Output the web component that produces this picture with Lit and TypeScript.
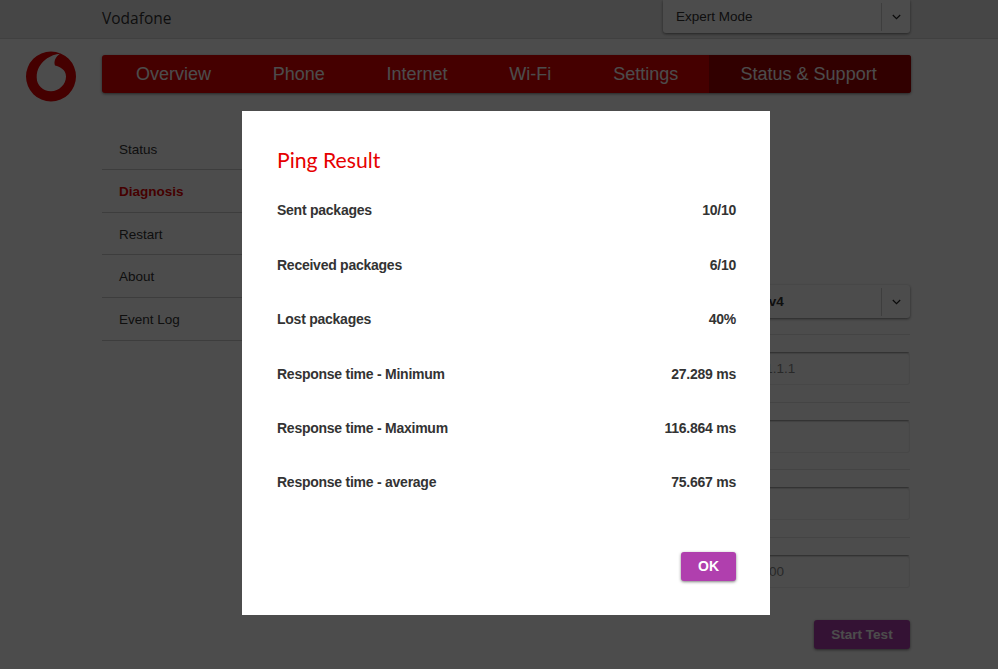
import { LitElement, html, css } from 'lit';
import { customElement } from 'lit/decorators.js';

const NAV = ['Overview', 'Phone', 'Internet', 'Wi-Fi', 'Settings'];
const SIDE = ['Status', 'Diagnosis', 'Restart', 'About', 'Event Log'];
const RESULTS = [
  ['Sent packages', '10/10'],
  ['Received packages', '6/10'],
  ['Lost packages', '40%'],
  ['Response time - Minimum', '27.289 ms'],
  ['Response time - Maximum', '116.864 ms'],
  ['Response time - average', '75.667 ms'],
];

const chevron = html`<svg width="9" height="6" viewBox="0 0 9 6"><path d="M.8 1l3.7 3.7L8.2 1" fill="none" stroke="currentColor" stroke-width="1.2"/></svg>`;

@customElement('app-root')
export class AppRoot extends LitElement {
  static styles = css`
    :host {
      display: block;
      height: 669px;
      overflow: hidden;
      background: #fff;
      color: #333;
      font-family: "Liberation Sans", Arial, sans-serif;
      font-size: 13.5px;
    }

    .topbar {
      height: 39px;
      box-sizing: border-box;
      padding-left: 102px;
      padding-right: 88px;
      display: flex;
      justify-content: space-between;
      background: #ececec;
      border-bottom: 1px solid #d8d8d8;
    }

    .brand {
      font-family: "Open Sans", sans-serif;
      font-size: 15.5px;
      line-height: 37px;
      color: #333;
    }

    .select {
      display: flex;
      align-items: center;
      height: 33px;
      box-sizing: border-box;
      background: #fff;
      border-radius: 0 0 3px 3px;
      box-shadow: 0 1px 3px rgba(0, 0, 0, 0.5);
      color: #333;
    }

    .select .value {
      flex: 1;
      padding-left: 13px;
    }

    .select .arrow {
      width: 28px;
      height: 28px;
      display: flex;
      align-items: center;
      justify-content: center;
      border-left: 1px solid #d0d0d0;
      color: #222;
    }

    .mode {
      width: 247px;
    }

    .head {
      display: flex;
      align-items: flex-start;
      padding: 12px 87px 0 26px;
    }

    .logo {
      width: 50px;
      height: 51px;
      flex: none;
    }

    .nav {
      margin-left: 26px;
      margin-top: 4px;
      flex: 1;
      height: 38px;
      display: flex;
      padding-left: 3px;
      background: #e60000;
      border-radius: 3px;
      box-shadow: 0 1px 3px rgba(0, 0, 0, 0.5);
      overflow: hidden;
      color: #fff;
      font-size: 18px;
      line-height: 39px;
    }

    .nav span {
      padding: 0 30.9px;
      white-space: nowrap;
    }

    .nav .active {
      flex: 1 0 auto;
      padding: 0 0 0 31.5px;
      background: #a60000;
    }

    .body {
      display: flex;
      padding: 0 88px 0 102px;
    }

    .side {
      width: 300px;
      flex: none;
      padding-top: 25.6px;
    }

    .side div {
      height: 42.6px;
      box-sizing: border-box;
      padding-left: 17px;
      line-height: 43px;
      border-bottom: 1px solid #ccc;
    }

    .side .current {
      color: #e60000;
      font-weight: bold;
    }

    .main {
      flex: 1;
      padding-top: 166px;
      padding-left: 40px;
    }

    .field {
      height: 67.4px;
      box-sizing: border-box;
      padding-top: 17px;
      border-bottom: 1px solid #e4e4e4;
      display: flex;
      justify-content: flex-end;
    }

    .field.last {
      border-bottom: none;
    }

    .field .select,
    .field .input {
      width: 169px;
    }

    .field .select {
      font-weight: bold;
      border-radius: 3px;
    }

    .field .select .value {
      padding-left: 15px;
      padding-bottom: 1px;
    }

    .input {
      height: 33px;
      box-sizing: border-box;
      padding-left: 12px;
      line-height: 31px;
      color: #888;
      border-radius: 3px;
      border: 1px solid #eee;
      border-top-color: #aaa;
      box-shadow: inset 0 1px 1px rgba(0, 0, 0, 0.15);
    }

    .actions {
      display: flex;
      justify-content: flex-end;
    }

    .start {
      width: 96px;
      height: 29px;
      margin-top: 15px;
      border-radius: 3px;
      text-align: center;
      line-height: 29px;
      font-weight: bold;
      color: #fff;
      background: #b03fae;
      box-shadow: 0 1px 3px rgba(0, 0, 0, 0.5);
    }

    .overlay {
      position: fixed;
      inset: 0;
      background: rgba(0, 0, 0, 0.7);
    }

    .modal {
      position: fixed;
      left: 242px;
      top: 111px;
      width: 528px;
      height: 504px;
      box-sizing: border-box;
      padding: 36px 34px 0 35px;
      background: #fff;
      color: #333;
    }

    .modal h2 {
      margin: 0 0 28.4px;
      font-family: Lato, sans-serif;
      font-size: 21.2px;
      font-weight: 400;
      line-height: 27px;
      color: #e60000;
    }

    .row {
      display: flex;
      justify-content: space-between;
      height: 54.4px;
      line-height: 17px;
      font-size: 14px;
      letter-spacing: -0.25px;
      font-weight: bold;
    }

    .footer {
      display: flex;
      justify-content: flex-end;
      padding-top: 23.1px;
    }

    .ok {
      width: 55px;
      height: 29px;
      border-radius: 3px;
      text-align: center;
      line-height: 29px;
      font-weight: bold;
      font-size: 14px;
      color: #fff;
      background: #b03fae;
      box-shadow: 0 1px 3px rgba(0, 0, 0, 0.5);
    }
  `;

  render() {
    return html`
      <div class="topbar">
        <div class="brand">Vodafone</div>
        <div class="select mode">
          <div class="value">Expert Mode</div>
          <div class="arrow">${chevron}</div>
        </div>
      </div>
      <div class="head">
        <svg class="logo" viewBox="0 0 50 50">
          <path fill="#e60000" fill-rule="evenodd" d="M25 0a25 25 0 1 0 0 50a25 25 0 1 0 0-50zM34 2.3C26 2.6 10.7 10 10.7 26C10.7 34 17 39.7 25 39.7C33 39.7 40 33 40 25C40 18 34 15.5 29 14C27.5 10 29.5 5.5 34 2.3Z"/>
        </svg>
        <div class="nav">
          ${NAV.map((n) => html`<span>${n}</span>`)}
          <span class="active">Status &amp; Support</span>
        </div>
      </div>
      <div class="body">
        <div class="side">
          ${SIDE.map((s) => html`<div class=${s === 'Diagnosis' ? 'current' : ''}>${s}</div>`)}
        </div>
        <div class="main">
          <div class="field">
            <div class="select">
              <div class="value">IPv4</div>
              <div class="arrow">${chevron}</div>
            </div>
          </div>
          <div class="field"><div class="input">1.1.1.1</div></div>
          <div class="field"><div class="input"></div></div>
          <div class="field"><div class="input"></div></div>
          <div class="field last"><div class="input">1000</div></div>
          <div class="actions"><div class="start">Start Test</div></div>
        </div>
      </div>
      <div class="overlay"></div>
      <div class="modal">
        <h2>Ping Result</h2>
        ${RESULTS.map(([k, v]) => html`<div class="row"><span>${k}</span><span>${v}</span></div>`)}
        <div class="footer"><div class="ok">OK</div></div>
      </div>
    `;
  }
}

declare global {
  interface HTMLElementTagNameMap {
    'app-root': AppRoot;
  }
}
